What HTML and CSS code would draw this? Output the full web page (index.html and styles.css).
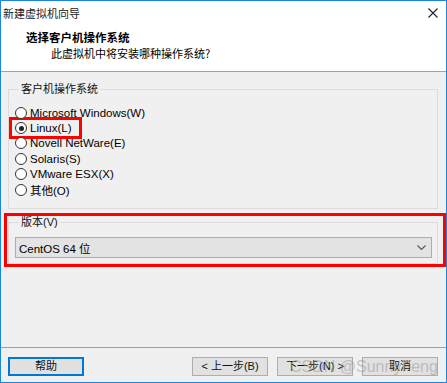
FILE: index.html
```html
<!DOCTYPE html>
<html>
<head>
<meta charset="utf-8">
<link rel="stylesheet" href="styles.css">
</head>
<body>
<div class="window">
  <div class="titlebar">
    <span class="title">新建虚拟机向导</span>
    <svg class="close" width="10" height="10" viewBox="0 0 10 10"><path d="M0.5 0.5 L9.5 9.5 M9.5 0.5 L0.5 9.5" stroke="#222" stroke-width="1.1" fill="none"/></svg>
  </div>
  <div class="header">
    <div class="h-title">选择客户机操作系统</div>
    <div class="h-sub">此虚拟机中将安装哪种操作系统?</div>
  </div>
  <div class="body">
    <fieldset class="group g1">
      <legend>客户机操作系统</legend>
      <div class="radio"><span class="circle"></span>Microsoft Windows(W)</div>
      <div class="radio hl"><span class="circle on"></span>Linux(L)</div>
      <div class="radio"><span class="circle"></span>Novell NetWare(E)</div>
      <div class="radio"><span class="circle"></span>Solaris(S)</div>
      <div class="radio"><span class="circle"></span>VMware ESX(X)</div>
      <div class="radio"><span class="circle"></span>其他(O)</div>
    </fieldset>
    <div class="redbox">
      <fieldset class="group g2">
        <legend>版本(V)</legend>
        <div class="select">
          <span>CentOS 64 位</span>
          <svg class="chev" width="9" height="5" viewBox="0 0 9 5"><path d="M0.5 0.5 L4.5 4.5 L8.5 0.5" stroke="#555" stroke-width="1.1" fill="none"/></svg>
        </div>
      </fieldset>
    </div>
  </div>
  <div class="footer">
    <button class="btn default">帮助</button>
    <div class="spacer"></div>
    <button class="btn">&lt; 上一步(B)</button>
    <button class="btn">下一步(N) &gt;</button>
    <button class="btn">取消</button>
  </div>
  <div class="watermark">CSDN @SunnyFeng</div>
</div>
</body>
</html>
```

FILE: styles.css
```css
html, body {
  margin: 0;
  padding: 0;
  background: #ffffff;
}
.window {
  position: relative;
  width: 447px;
  height: 383px;
  box-sizing: border-box;
  border: 1px solid #1a86e0;
  display: flex;
  flex-direction: column;
  font-family: "Liberation Sans", "Noto Sans CJK SC", sans-serif;
  font-size: 11px;
  color: #000;
  background: #f0f0f0;
  overflow: hidden;
}
.titlebar {
  height: 24px;
  background: #fff;
  display: flex;
  align-items: center;
  padding: 0 8px 0 2px;
}
.title {
  flex: 1;
  font-family: "Noto Sans CJK SC", sans-serif;
  font-size: 11px;
  color: #222;
  line-height: 24px;
}
.close {
  display: block;
  margin-top: -1px;
}
.header {
  height: 47px;
  box-sizing: border-box;
  background: #fff;
  padding-top: 4px;
  border-bottom: 1px solid #a0a0a0;
}
.h-title {
  font-family: "Noto Sans CJK SC", sans-serif;
  font-weight: bold;
  font-size: 11.5px;
  line-height: 16px;
  padding-left: 25px;
}
.h-sub {
  font-family: "Noto Sans CJK SC", sans-serif;
  font-size: 11px;
  line-height: 16px;
  padding-left: 50px;
}
.body {
  flex: 1;
  padding: 10px 8px 0 7px;
  display: flex;
  flex-direction: column;
}
.group {
  margin: 0;
  border: 1px solid #dcdcdc;
  min-width: 0;
}
.group legend {
  padding: 0 2px;
  margin-left: 4px;
  line-height: 14px;
  color: #111;
}
.g1 {
  padding: 9px 6px 11px 6px;
}
.radio {
  display: flex;
  align-items: center;
  height: 15.4px;
  width: fit-content;
  font-size: 11.5px;
}
.circle {
  width: 10px;
  height: 10px;
  border: 1px solid #333;
  border-radius: 50%;
  background: #fff;
  margin-right: 3px;
  position: relative;
  box-sizing: content-box;
}
.circle.on::after {
  content: "";
  position: absolute;
  left: 2.5px;
  top: 2.5px;
  width: 5px;
  height: 5px;
  border-radius: 50%;
  background: #222;
}
.radio.hl {
  margin-left: -3px;
  padding: 0 7px 0 3px;
  outline: 3px solid #ff0000;
}
.redbox {
  margin: 4px -8px 0 -4px;
  border: 3px solid #ff0000;
  padding: 0 5px 0 1px;
}
.g2 {
  padding: 8px 5px 5px 6px;
}
.g2 legend {
  line-height: 13px;
}
.select {
  height: 21px;
  box-sizing: border-box;
  border: 1px solid #adadad;
  background: #e3e3e3;
  display: flex;
  align-items: center;
  padding: 0 5px 0 3px;
  font-size: 11.5px;
}
.select span {
  flex: 1;
}
.chev {
  display: block;
}
.footer {
  height: 35px;
  box-sizing: border-box;
  border-top: 1px solid #a0a0a0;
  padding: 9px 8px 0 7px;
  display: flex;
  align-items: flex-start;
  gap: 9px;
}
.spacer {
  flex: 1;
}
.btn {
  width: 76px;
  height: 19px;
  box-sizing: border-box;
  border: 1px solid #adadad;
  background: #e1e1e1;
  font-family: "Liberation Sans", "Noto Sans CJK SC", sans-serif;
  font-size: 11px;
  color: #111;
  padding: 0;
  margin: 0;
  line-height: 17px;
}
.btn.default {
  border: 1px solid #0078d7;
  box-shadow: inset 0 0 0 1px #0078d7;
}
.watermark {
  position: absolute;
  left: 289px;
  top: 356px;
  font-family: "Liberation Sans", sans-serif;
  font-size: 16px;
  line-height: 20px;
  color: rgba(150, 150, 150, 0.5);
  pointer-events: none;
}
```
